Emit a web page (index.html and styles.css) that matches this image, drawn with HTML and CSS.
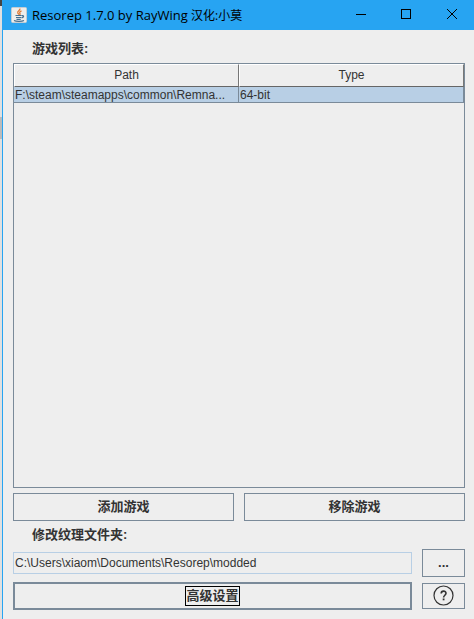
FILE: index.html
```
<!DOCTYPE html>
<html lang="zh-CN">
<head>
    <meta charset="UTF-8">
    <meta name="viewport" content="width=device-width, initial-scale=1.0">
    <title>Resorep 1.7.0</title>
    <link rel="stylesheet" href="styles.css">
</head>
<body>
    <div class="desktop"><span class="desktop-mark"></span><span class="desktop-bar"></span></div>
    <div class="window">
        <header class="titlebar">
            <svg class="app-icon" width="16" height="16" viewBox="0 0 16 16">
                <rect x="0.5" y="0.5" width="15" height="15" rx="1" fill="#eeeeec" stroke="#c4cdd3"/>
                <path d="M8.800 1.500c1 1.800-3 2.600-2 4.400.3.700 1 1.100 1 1.800M10.500 3.800c-2 1-2.200 1.800-1.500 2.600.4.600 0 1.100-.5 1.600" fill="none" stroke="#e07a35" stroke-width="1.300"/>
                <path d="M4.500 8.500h6M5 10.500h5.200M5.500 12.300h4.200M10.800 8.700c2.500-.6 2.300 1.700-.2 2.200M3 13.500c2 1.200 8 1.200 10 0" fill="none" stroke="#456f90" stroke-width="1.200"/>
            </svg>
            <h1>Resorep 1.7.0 by RayWing <span>汉化:小莫</span></h1>
            <button type="button" class="control" aria-label="Minimize">
                <svg width="12" height="12" viewBox="0 0 12 12"><path d="M0 5.500h10" stroke="#000" fill="none"/></svg>
            </button>
            <button type="button" class="control" aria-label="Maximize">
                <svg width="12" height="12" viewBox="0 0 12 12"><rect x="0.500" y="0.500" width="9" height="9" stroke="#000" fill="none"/></svg>
            </button>
            <button type="button" class="control" aria-label="Close">
                <svg width="12" height="12" viewBox="0 0 12 12"><path d="M1 0l10 10M11 0L1 10" stroke="#000" fill="none"/></svg>
            </button>
        </header>
        <main class="content">
            <h2 class="label" id="games-label">游戏列表:</h2>
            <div class="table-pane">
                <table aria-labelledby="games-label">
                    <thead>
                        <tr><th>Path</th><th>Type</th></tr>
                    </thead>
                    <tbody>
                        <tr class="selected"><td>F:\steam\steamapps\common\Remna...</td><td>64-bit</td></tr>
                    </tbody>
                </table>
            </div>
            <div class="buttons">
                <button type="button" class="button">添加游戏</button>
                <button type="button" class="button">移除游戏</button>
            </div>
            <label class="label" for="folder">修改纹理文件夹:</label>
            <div class="settings">
                <input type="text" id="folder" value="C:\Users\xiaom\Documents\Resorep\modded">
                <button type="button" class="button">...</button>
                <button type="button" class="button advanced"><span>高级设置</span></button>
                <button type="button" class="button help" aria-label="Help">
                    <svg width="22" height="22" viewBox="0 0 22 22">
                        <circle cx="10.500" cy="10.500" r="9.500" fill="none" stroke="#333" stroke-width="1.200"/>
                        <path d="M8.200 8.600c0-3.200 4.800-3.200 4.800-.3 0 1.900-2.400 2-2.400 4.200" fill="none" stroke="#333" stroke-width="1.600"/>
                        <rect x="9.700" y="13.500" width="1.800" height="1.800" fill="#333"/>
                    </svg>
                </button>
            </div>
        </main>
    </div>
</body>
</html>
```

FILE: styles.css
```
* {
    box-sizing: border-box;
}
body {
    display: flex;
    min-height: 100vh;
    margin: 0;
    background-color: #eee;
    color: #333;
    font-family: "Liberation Sans", "Noto Sans CJK SC", sans-serif;
    font-size: 12px;
}
button, input {
    margin: 0;
    color: inherit;
    font-family: inherit;
    font-size: inherit;
}
svg {
    display: block;
}
.desktop {
    width: 2px;
    background-color: #e0e0e0;
}
.desktop-mark {
    display: block;
    height: 6px;
    background-color: #444;
}
.desktop-bar {
    display: block;
    height: 22px;
    margin-top: 111px;
    background-color: #bbb;
}
.window {
    flex: 1;
    display: flex;
    flex-direction: column;
    min-width: 0;
    border-left: 1px solid #27a4f2;
}
.titlebar {
    display: flex;
    align-items: center;
    height: 30px;
    padding-left: 8px;
    background-color: #27a4f2;
    color: #000;
}
.titlebar h1 {
    flex: 1;
    margin: 0 0 0 5px;
    font-family: "Open Sans", "Noto Sans CJK SC", sans-serif;
    font-size: 13px;
    font-weight: normal;
    line-height: 16px;
    white-space: nowrap;
}
.titlebar h1 span {
    font-size: 12px;
}
.control {
    display: flex;
    align-items: center;
    justify-content: center;
    width: 45px;
    height: 28px;
    padding: 0;
    border: none;
    background: none;
}
.content {
    flex: 1;
    display: flex;
    flex-direction: column;
    padding: 10px 9px 9px 10px;
}
.label {
    display: block;
    margin: 0 0 5px 19px;
    font-size: 13px;
    font-weight: bold;
    line-height: 18px;
}
.table-pane {
    flex: 1;
    border: 1px solid #7a8a99;
}
table {
    width: 100%;
    table-layout: fixed;
    border-collapse: separate;
    border-spacing: 0;
}
th {
    height: 23px;
    padding: 0 0 2px;
    border: 1px solid;
    border-color: #fff #777 #666 #fff;
    font-weight: normal;
    line-height: 16px;
}
td {
    height: 16px;
    padding: 0 1px;
    border-right: 1px solid #7a8a99;
    border-bottom: 1px solid #7a8a99;
    line-height: 14px;
    white-space: nowrap;
    overflow: hidden;
}
.selected {
    background-color: #b8cfe5;
}
.buttons {
    display: grid;
    grid-template-columns: 1fr 1fr;
    gap: 10px;
    margin: 5px 0;
}
.button {
    height: 28px;
    padding: 0;
    border: 1px solid #7a8a99;
    background-color: #eee;
    font-size: 13px;
    font-weight: bold;
    line-height: 18px;
}
.settings {
    display: grid;
    grid-template-columns: 1fr 43px;
    gap: 5px 10px;
    align-items: center;
}
.settings input {
    width: 100%;
    height: 22px;
    padding: 0 1px;
    border: 1px solid #b8cfe5;
    background-color: #eee;
}
.advanced {
    border-width: 2px;
}
.advanced span {
    display: inline-block;
    outline: 1px solid #000;
}
.help {
    display: flex;
    align-items: center;
    justify-content: center;
    height: 26px;
}
```
